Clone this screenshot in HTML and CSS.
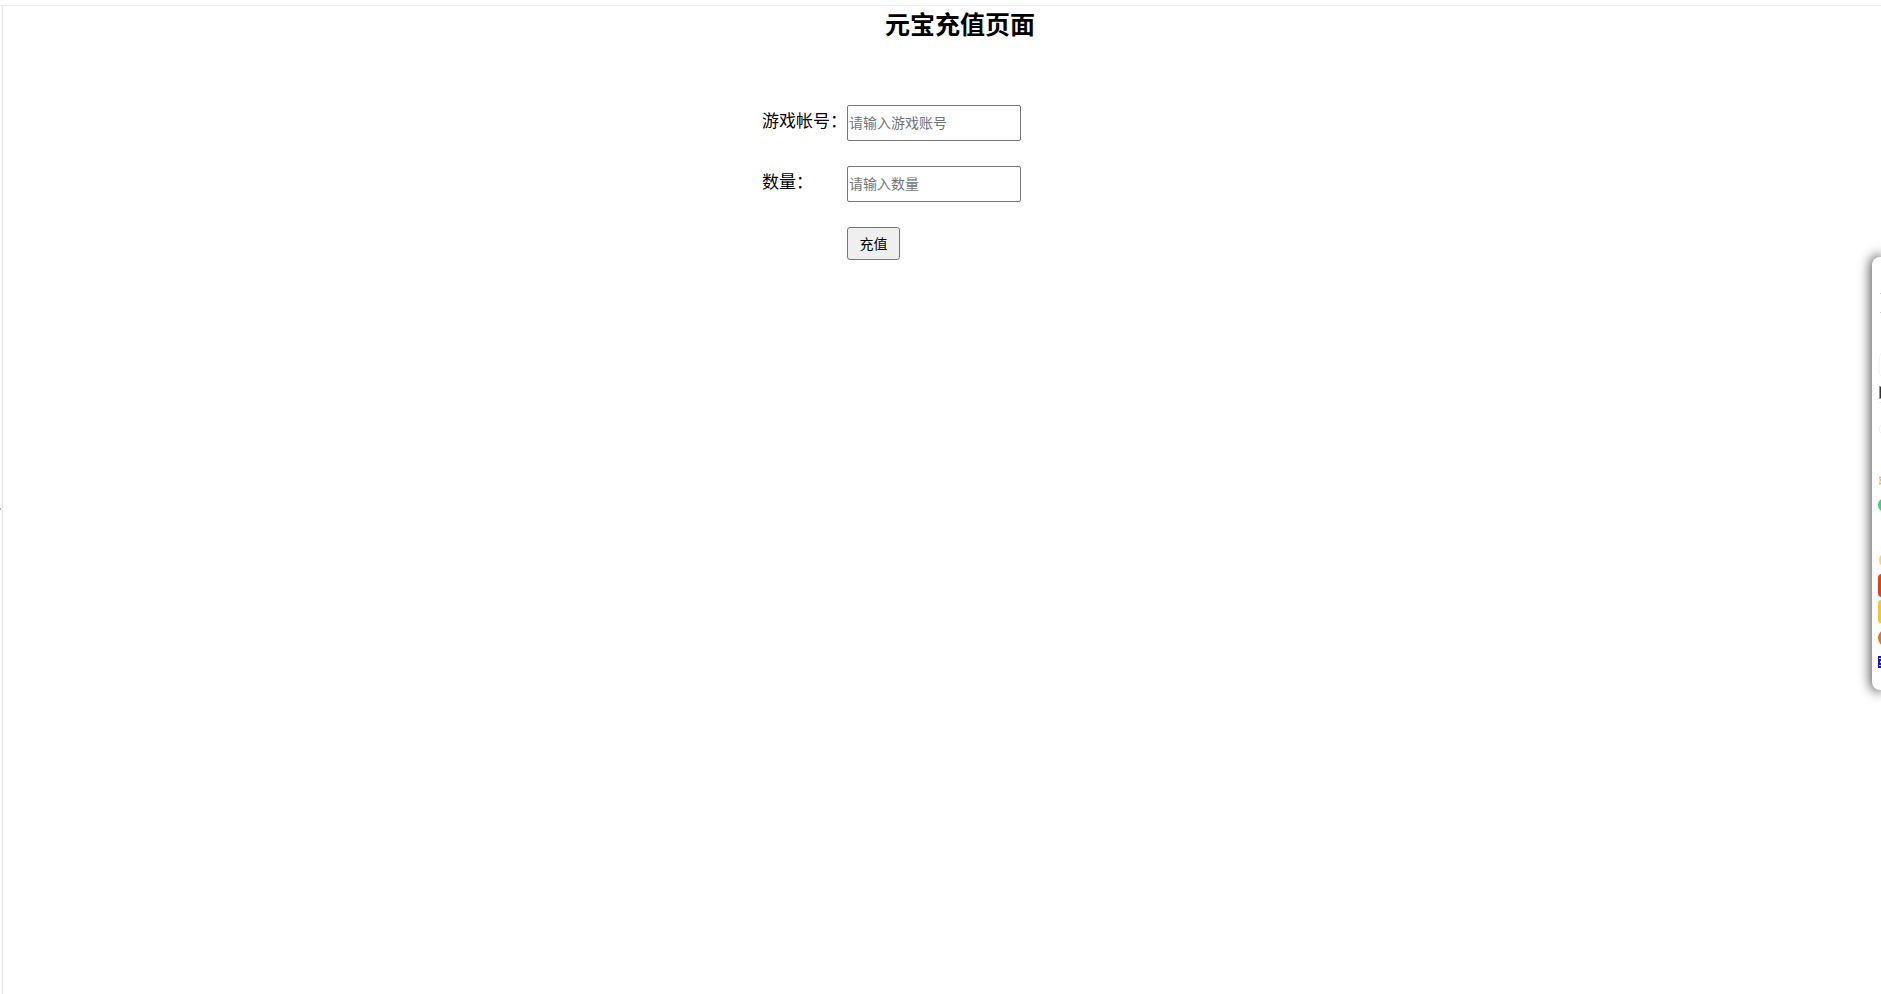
FILE: index.html
```
<!DOCTYPE html>
<html lang="zh-CN">
<head>
<meta charset="utf-8">
<title>元宝充值页面</title>
<link rel="stylesheet" href="styles.css">
</head>
<body>
<div class="frame">
  <span class="handle"></span>
  <main class="content">
    <h1 class="title">元宝充值页面</h1>
    <form class="form">
      <label class="label" for="account">游戏帐号：</label>
      <input class="field" id="account" type="text" placeholder="请输入游戏账号">
      <label class="label" for="amount">数量：</label>
      <input class="field" id="amount" type="text" placeholder="请输入数量">
      <button class="submit" type="button">充值</button>
    </form>
  </main>
</div>
<aside class="drawer">
  <svg class="drawer-icons" width="9" height="433" viewBox="0 0 9 433" aria-hidden="true">
    <path d="M8 36h1v1h-1zM8 55h1v1h-1z" fill="#ccc"/>
    <path d="M9 96Q7 98 7 106v6q0 6 2 7" fill="none" stroke="#f3f3f3"/>
    <path d="M7 129h2v13h-2z" fill="#999"/>
    <path d="M8 130h1v11h-1z" fill="#333"/>
    <path d="M7 145h2v1h-2z" fill="#eee"/>
    <circle cx="12" cy="172" r="5" fill="none" stroke="#eee"/>
    <path d="M7 219h2v9h-2z" fill="#f6dfa6"/>
    <path d="M7 220h2v1h-2zM8 222h1v2h-1zM7 226h2v1h-2z" fill="#e8bc57"/>
    <circle cx="13" cy="248" r="7" fill="#22df70"/>
    <circle cx="15" cy="303" r="8" fill="#ffe000"/>
    <rect x="6" y="317" width="20" height="23" rx="4" fill="#f43a09"/>
    <rect x="6" y="343" width="20" height="23" rx="3" fill="#ffc61e"/>
    <circle cx="15" cy="381" r="9" fill="#f56b12"/>
    <path d="M6 399h3v12h-3z" fill="#0b13e8"/>
    <path d="M7 401h2v1h-2zM8 404h1v2h-1zM7 408h2v1h-2z" fill="#d4d69b"/>
  </svg>
</aside>
</body>
</html>
```
FILE: styles.css
```
* {
  box-sizing: border-box;
}

body {
  margin: 0;
  padding-top: 5px;
  background: #fff;
  color: #000;
  font-family: "Noto Sans CJK SC", sans-serif;
  overflow: hidden;
}

.frame {
  position: relative;
  display: flex;
  min-height: calc(100vh - 5px);
  border-top: 1px solid #ededed;
}

.frame::before {
  content: "";
  width: 1px;
  margin-left: 2px;
  background: #e4e4e4;
}

.handle {
  position: absolute;
  left: 0;
  top: 502px;
  width: 1px;
  height: 2px;
  background: #aaa;
}

.content {
  flex: 1;
  display: flex;
  flex-direction: column;
  align-items: center;
  padding-left: 36px;
}

.title {
  margin: 0 0 65px;
  font-size: 25px;
  line-height: 34px;
  font-weight: 700;
}

.form {
  display: grid;
  grid-template-columns: 85px 174px;
  row-gap: 25px;
  width: 396px;
}

.label {
  font-size: 17px;
  line-height: 30px;
  white-space: nowrap;
}

.field {
  height: 36px;
  padding: 0 1px 2px;
  border: 1px solid #767676;
  border-radius: 2px;
  background: #fff;
  font-family: inherit;
  font-size: 14px;
}

.field::placeholder {
  color: #757575;
}

.submit {
  grid-column: 2;
  justify-self: start;
  width: 53px;
  height: 33px;
  padding: 0 0 2px;
  border: 1px solid #767676;
  border-radius: 3px;
  background: #efefef;
  color: #000;
  font-family: inherit;
  font-size: 14px;
}

.drawer {
  position: fixed;
  right: 0;
  top: 257px;
  width: 9px;
  border-radius: 8px 0 0 8px;
  background: #fff;
  box-shadow: 0 0 12px 2px #555;
}

.drawer-icons {
  display: block;
}
```
